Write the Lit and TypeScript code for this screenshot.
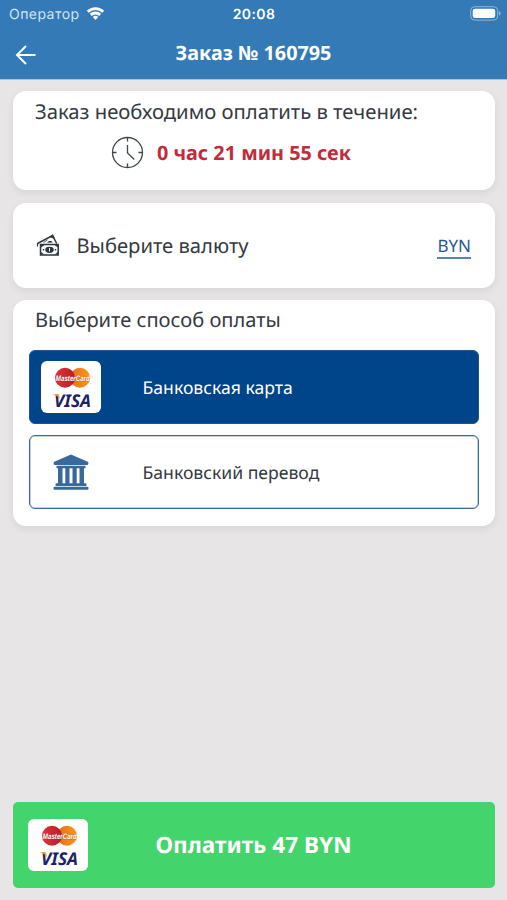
import { LitElement, html, css, svg } from "lit";
import { customElement, property } from "lit/decorators.js";

@customElement("card-logos")
class CardLogos extends LitElement {
  static styles = css`
    :host { display: block; flex: none; width: 60px; height: 52px; }
    svg { display: block; text-rendering: geometricPrecision; }
    .mc { font: italic 700 8px "Liberation Sans", sans-serif; }
    .visa { font: italic 700 17.5px "Noto Sans", sans-serif; }
  `;
  render() {
    return html`<svg width="60" height="52" viewBox="0 0 60 52">
      <defs>
        <linearGradient id="red" x1="0" y1="0" x2="1" y2="0">
          <stop offset="0" stop-color="#e0323a" /><stop offset="1" stop-color="#b81e26" />
        </linearGradient>
        <linearGradient id="orange" x1="0" y1="0" x2="1" y2="0">
          <stop offset="0" stop-color="#e8691c" /><stop offset="1" stop-color="#fb9a16" />
        </linearGradient>
      </defs>
      <rect width="60" height="52" rx="6" fill="#fff" />
      <circle cx="39" cy="16.7" r="10" fill="url(#orange)" />
      <circle cx="24" cy="16.7" r="10" fill="url(#red)" />
      <text class="mc" x="14.8" y="19.5" textLength="34" lengthAdjust="spacingAndGlyphs" fill="#fff" stroke="#7d2a2a" stroke-opacity=".4" stroke-width=".8" paint-order="stroke">MasterCard</text>
      <text class="visa" x="13" y="45.7" textLength="37" lengthAdjust="spacingAndGlyphs" fill="#1b2266">VISA</text>
      <path d="M12.3 33.2h4.2c1 0 1.4.4 1.7 1.4l.9 4c-1.4-2.6-3.2-4.3-6.8-4.9z" fill="#e8a13a" />
    </svg>`;
  }
}

@customElement("pay-option")
class PayOption extends LitElement {
  @property() label = "";
  @property({ type: Boolean, reflect: true }) selected = false;
  static styles = css`
    :host { display: flex; align-items: center; box-sizing: border-box; height: 74px;
      border: 1.5px solid #39699b; border-radius: 6px; color: #343a40; background: #fff;
      box-shadow: inset 0 0 0 .5px #8aa9c8; }
    :host([selected]) { background: #00448a; color: #fff; border-color: #1c5594; box-shadow: none; }
    .icon { width: 60px; margin-left: 11px; display: flex; justify-content: center; flex: none; }
    .label { margin: 2px 0 0 42px; font-size: 17.6px; line-height: 24px; }
  `;
  render() {
    return html`<div class="icon"><slot></slot></div><span class="label">${this.label}</span>`;
  }
}

const wifi = svg`<path d="M.6 4.6a12 12 0 0 1 16.8 0L15.5 6.6a9.2 9.2 0 0 0-13 0z"/><path d="M3.5 7.6a7.8 7.8 0 0 1 11 0l-1.9 2a5.2 5.2 0 0 0-7.2 0z"/><path d="M6.3 10.6a3.9 3.9 0 0 1 5.4 0L9 13.4z"/>`;

@customElement("app-root")
class AppRoot extends LitElement {
  static styles = css`
    :host { display: flex; flex-direction: column; box-sizing: border-box; height: 900px; text-rendering: geometricPrecision;
      background: #e7e5e6; font-family: "Noto Sans", "Open Sans", sans-serif; color: #343a40; }
    svg { display: block; flex: none; }
    header { height: 80px; background: #337ab7; color: #fff; flex: none; border-bottom: 1px solid #a9c3dc; box-sizing: border-box; }
    .status { height: 27px; display: grid; grid-template-columns: 1fr auto 1fr; align-items: center;
      font: 14px/18px Inter, sans-serif; padding: 0 6px 0 9px; }
    .carrier { display: flex; align-items: center; gap: 6px; color: #d3e3f1; letter-spacing: .45px; }
    .carrier span { padding-top: 2px; }
    .time { font-weight: 600; letter-spacing: .4px; margin: 2px 2px 0 0; }
    .battery { justify-self: end; }
    .nav { height: 52px; display: grid; grid-template-columns: 60px 1fr 60px; align-items: center; }
    .back { margin: 4px 0 0 15px; }
    .title { text-align: center; font-weight: 700; font-size: 19.8px; line-height: 26px; }
    main { flex: 1; display: flex; flex-direction: column; gap: 12.3px; padding: 11.3px 12.5px 12px; }
    .card { background: #fff; border-radius: 13px; box-shadow: 0 3px 9px rgba(0,0,0,.07); box-sizing: border-box; }
    .lead { font-size: 20.1px; line-height: 26px; padding-left: 22.5px; }
    .deadline { height: 99px; padding-top: 7px; }
    .deadline .lead { font-size: 20.25px; }
    .timer { display: flex; align-items: center; gap: 13.5px; padding: 12px 0 0 98px; }
    .left { font-weight: 700; font-size: 19.8px; line-height: 26px; color: #c42b3a; }
    .currency { height: 85px; display: flex; align-items: center; padding: 0 23.5px 0 23px; }
    .pick { font-size: 20.2px; line-height: 26px; margin: 0 0 1px 17px; flex: 1; }
    .code { font-size: 17px; line-height: 23px; color: #27588f; border-bottom: 2px solid #5684b1; margin-top: 2px; }
    .methods { height: 226px; padding-top: 7px; }
    .list { display: flex; flex-direction: column; gap: 11px; padding: 17px 16px 0; }
    .pay { margin-top: auto; height: 86px; border-radius: 5px; background: #44d46c; color: #fff;
      display: grid; grid-template-columns: 60px 1fr 60px; align-items: center; padding: 0 15px; box-sizing: border-box; }
    .sum { text-align: center; font-size: 22.6px; line-height: 30px; font-weight: 700; }
  `;
  render() {
    return html`
      <header>
        <div class="status">
          <div class="carrier"><span>Оператор</span><svg width="19" height="14.5" viewBox="0 0 18 14" fill="#fff">${wifi}</svg></div>
          <div class="time">20:08</div>
          <svg class="battery" width="31" height="15" viewBox="0 0 31 15">
            <rect x=".7" y=".7" width="27" height="13.4" rx="4" fill="none" stroke="#90b7d8" stroke-width="1" />
            <rect x="2.7" y="2.7" width="22.5" height="9.4" rx="2.4" fill="#fff" />
            <path d="M29 5.2v4.4c1.2-.4 1.6-1.2 1.6-2.2S30.2 5.6 29 5.2z" fill="#90b7d8" />
          </svg>
        </div>
        <div class="nav">
          <svg class="back" width="22" height="20" viewBox="0 0 22 20" fill="none" stroke="#fff" stroke-width="2"><path d="M20.5 10H2M11 1 2 10l9 9" /></svg>
          <div class="title">Заказ № 160795</div>
        </div>
      </header>
      <main>
        <section class="card deadline">
          <div class="lead">Заказ необходимо оплатить в течение:</div>
          <div class="timer">
            <svg width="33" height="33" viewBox="0 0 33 33" fill="none" stroke="#40464d" stroke-width="1.3">
              <circle cx="16.5" cy="16.5" r="15" /><path d="M16.5 1.5v4M16.5 27.5v4M1.5 16.5h4M27.5 16.5h4M16.5 9v8l6.8 6.5" />
            </svg>
            <span class="left">0 час 21 мин 55 сек</span>
          </div>
        </section>
        <section class="card currency">
          <svg width="24" height="24" viewBox="0 0 24 24" fill="none" stroke="#2d3740">
            <path d="M1.5 10.5 16.5 2.5l4.2 8" stroke-width="1.5" />
            <path d="M1.5 10v3.500" stroke-width="1.2" />
            <path d="m13.8 3.800 3-2 1.800 3.800zM7.500 9.500l4-2.600" fill="#2d3740" stroke-width=".8" />
            <path d="M11.200 9.800c.8-2 4.200-2.500 5.500-.3z" fill="#2d3740" stroke="none" />
            <rect x="4.5" y="11.5" width="17.7" height="10.5" stroke-width="1.5" />
            <path d="M5 12h3.500L5 14.500zM22 12h-3.500l3.500 2.500zM5 21.500h3.500L5 19zM22 21.500h-3.500L22 19z" fill="#2d3740" stroke="none" />
            <ellipse cx="13.5" cy="16.8" rx="4.3" ry="3.1" fill="#2d3740" stroke="none" />
            <path d="M6.800 16.800h1.400M18.800 16.800h1.400" stroke-width="1.6" />
            <path d="M13.500 15v3.500" stroke="#fff" stroke-width="1" />
          </svg>
          <span class="pick">Выберите валюту</span>
          <span class="code">BYN</span>
        </section>
        <section class="card methods">
          <div class="lead">Выберите способ оплаты</div>
          <div class="list">
            <pay-option label="Банковская карта" selected><card-logos></card-logos></pay-option>
            <pay-option label="Банковский перевод">
              <svg width="36" height="36" viewBox="0 0 36 36" fill="#39699b">
                <path d="M18 .5 35.3 8v1.800q0 1.200-1.200 1.200H1.900Q.7 11 .7 9.800V8z" />
                <path d="M3.500 11.800h29v2.400h-29zM5 14h4.500v16H5zM12.300 14h4.200v16h-4.200zM19.500 14h4.200v16h-4.200zM26.500 14H31v16h-4.500z" />
                <rect x="2.5" y="29.2" width="31" height="2.8" rx=".8" /><rect x=".5" y="32.8" width="35" height="2.9" rx="1" />
              </svg>
            </pay-option>
          </div>
        </section>
        <div class="pay"><card-logos></card-logos><span class="sum">Оплатить 47 BYN</span></div>
      </main>
    `;
  }
}
